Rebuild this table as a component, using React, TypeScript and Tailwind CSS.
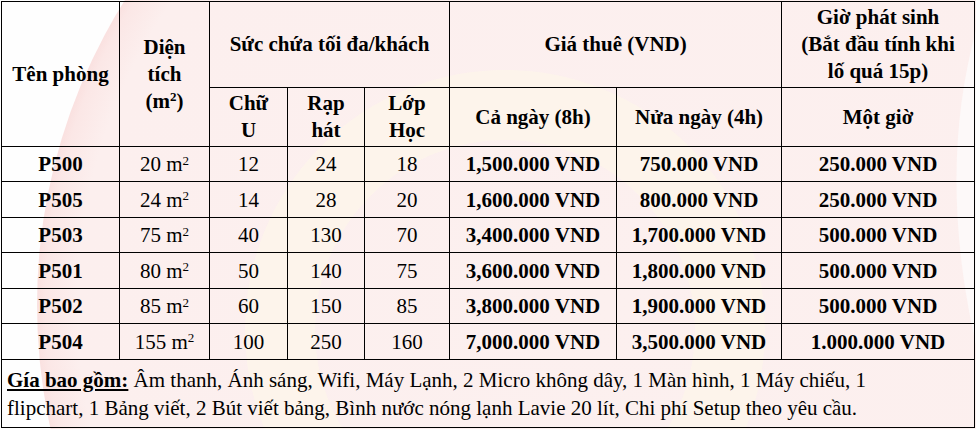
import React from "react";

const rows = [
  { name: "P500", area: "20", u: "12", r: "24", l: "18", full: "1,500.000 VND", half: "750.000 VND", hour: "250.000 VND" },
  { name: "P505", area: "24", u: "14", r: "28", l: "20", full: "1,600.000 VND", half: "800.000 VND", hour: "250.000 VND" },
  { name: "P503", area: "75", u: "40", r: "130", l: "70", full: "3,400.000 VND", half: "1,700.000 VND", hour: "500.000 VND" },
  { name: "P501", area: "80", u: "50", r: "140", l: "75", full: "3,600.000 VND", half: "1,800.000 VND", hour: "500.000 VND" },
  { name: "P502", area: "85", u: "60", r: "150", l: "85", full: "3,800.000 VND", half: "1,900.000 VND", hour: "500.000 VND" },
  { name: "P504", area: "155", u: "100", r: "250", l: "160", full: "7,000.000 VND", half: "3,500.000 VND", hour: "1.000.000 VND" },
];

const heights = ["h-[35px]", "h-[36px]", "h-[35px]", "h-[36px]", "h-[35px]", "h-[36px]"];

function Watermark() {
  return (
    <svg className="absolute inset-0 z-0" width="976" height="429" viewBox="0 0 976 429">
      <defs>
        <radialGradient id="pk" cx="610" cy="305" r="573" gradientUnits="userSpaceOnUse">
          <stop offset="0" stopColor="#fcf0ef" />
          <stop offset="0.93" stopColor="#fcefee" />
          <stop offset="0.985" stopColor="#fbe7e6" />
          <stop offset="1" stopColor="#fae1e0" />
        </radialGradient>
      </defs>
      <rect x="0" y="0" width="976" height="429" fill="#fefefe" />
      <circle cx="610" cy="305" r="573" fill="url(#pk)" />
      <path d="M976 30 C952 120 948 220 976 345 Z" fill="#fdf9f9" />
      <circle cx="505" cy="330" r="225" fill="none" stroke="#fdf6ea" strokeWidth="70" opacity="0.75" />
    </svg>
  );
}

function Sup() {
  return <sup className="text-[13px]">2</sup>;
}

export default function App() {
  const th = "border border-black font-bold text-center align-middle";
  const td = "border border-black text-center align-middle p-0";
  return (
    <div className="relative w-[976px] h-[429px] overflow-hidden text-black font-['Liberation_Serif',serif] text-[21px]">
      <Watermark />
      <div className="relative z-10 pl-px pt-px">
        <table className="border-collapse table-fixed w-[973px]">
          <colgroup>
            <col className="w-[118px]" />
            <col className="w-[90px]" />
            <col className="w-[78px]" />
            <col className="w-[77px]" />
            <col className="w-[85px]" />
            <col className="w-[167px]" />
            <col className="w-[165px]" />
            <col className="w-[193px]" />
          </colgroup>
          <thead>
            <tr className="h-[86px] leading-[27px]">
              <th rowSpan={2} className={th}>Tên phòng</th>
              <th rowSpan={2} className={th}>
                Diện<br />tích<br />(m<Sup />)
              </th>
              <th colSpan={3} className={th}>Sức chứa tối đa/khách</th>
              <th colSpan={2} className={th}>Giá thuê (VND)</th>
              <th className={th}>
                Giờ phát sinh<br />(Bắt đầu tính khi<br />lố quá 15p)
              </th>
            </tr>
            <tr className="h-[59px] leading-[27px]">
              <th className={th}>Chữ<br />U</th>
              <th className={th}>Rạp<br />hát</th>
              <th className={th}>Lớp<br />Học</th>
              <th className={th}>Cả ngày (8h)</th>
              <th className={th}>Nửa ngày (4h)</th>
              <th className={th}>Một giờ</th>
            </tr>
          </thead>
          <tbody className="leading-[24px]">
            {rows.map((r, i) => (
              <tr key={r.name} className={heights[i]}>
                <td className={`${td} font-bold`}>{r.name}</td>
                <td className={td}>
                  {r.area} m<Sup />
                </td>
                <td className={td}>{r.u}</td>
                <td className={td}>{r.r}</td>
                <td className={td}>{r.l}</td>
                <td className={`${td} font-bold`}>{r.full}</td>
                <td className={`${td} font-bold`}>{r.half}</td>
                <td className={`${td} font-bold`}>{r.hour}</td>
              </tr>
            ))}
            <tr className="h-[68px]">
              <td colSpan={8} className="border border-black text-left align-middle pl-[5px] leading-[28px]">
                <span className="font-bold underline">Gía bao gồm:</span> Âm thanh, Ánh sáng, Wifi, Máy Lạnh, 2 Micro không dây, 1 Màn hình, 1 Máy chiếu, 1
                <br />
                flipchart, 1 Bảng viết, 2 Bút viết bảng, Bình nước nóng lạnh Lavie 20 lít, Chi phí Setup theo yêu cầu.
              </td>
            </tr>
          </tbody>
        </table>
      </div>
    </div>
  );
}
